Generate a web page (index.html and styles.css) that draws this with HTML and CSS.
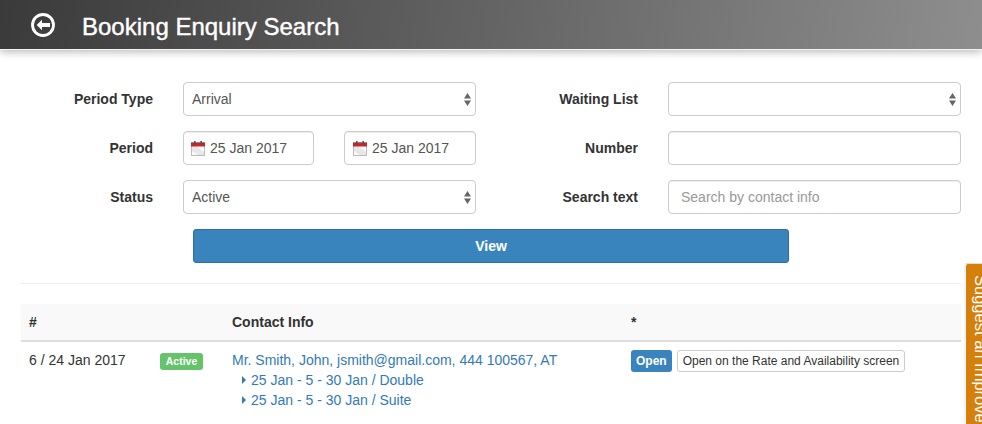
FILE: index.html
```html
<!DOCTYPE html>
<html lang="en">
<head>
<meta charset="utf-8">
<title>Booking Enquiry Search</title>
<link rel="stylesheet" href="styles.css">
</head>
<body>
<header class="topbar">
  <svg class="back" width="26" height="26" viewBox="0 0 26 26"><circle cx="13" cy="13" r="10.5" fill="none" stroke="#fff" stroke-width="2.8"/><path d="M6.7 13l5.3-5.3V11h8v4h-8v3.3z" fill="#fff"/></svg>
  <h1 class="title">Booking Enquiry Search</h1>
</header>
<main class="content">
  <form class="search">
    <div class="row">
      <label class="lbl">Period Type</label>
      <div class="field sel"><span>Arrival</span><svg class="updown" width="7" height="13" viewBox="0 0 7 13"><path d="M3.5 0L7 5.5H0zM3.5 13L0 7.5h7z" fill="#666"/></svg></div>
      <label class="lbl">Waiting List</label>
      <div class="field sel"><span></span><svg class="updown" width="7" height="13" viewBox="0 0 7 13"><path d="M3.5 0L7 5.5H0zM3.5 13L0 7.5h7z" fill="#666"/></svg></div>
    </div>
    <div class="row">
      <label class="lbl">Period</label>
      <div class="dates">
        <div class="field date"><svg class="cal" width="14" height="15" viewBox="0 0 14 15"><rect x=".5" y="1.5" width="13" height="13" fill="#e8e8e8" stroke="#bbb"/><path d="M1 10l6 4H1zM5 5l8 6V5z" fill="#fafafa"/><rect x="0" y="1.5" width="14" height="4" fill="#c5282a"/><rect x="3" y="0" width="1.6" height="3.5" fill="#555"/><rect x="9.4" y="0" width="1.6" height="3.5" fill="#555"/></svg><span>25 Jan 2017</span></div>
        <div class="field date"><svg class="cal" width="14" height="15" viewBox="0 0 14 15"><rect x=".5" y="1.5" width="13" height="13" fill="#e8e8e8" stroke="#bbb"/><path d="M1 10l6 4H1zM5 5l8 6V5z" fill="#fafafa"/><rect x="0" y="1.5" width="14" height="4" fill="#c5282a"/><rect x="3" y="0" width="1.6" height="3.5" fill="#555"/><rect x="9.4" y="0" width="1.6" height="3.5" fill="#555"/></svg><span>25 Jan 2017</span></div>
      </div>
      <label class="lbl">Number</label>
      <div class="field"></div>
    </div>
    <div class="row">
      <label class="lbl">Status</label>
      <div class="field sel"><span>Active</span><svg class="updown" width="7" height="13" viewBox="0 0 7 13"><path d="M3.5 0L7 5.5H0zM3.5 13L0 7.5h7z" fill="#666"/></svg></div>
      <label class="lbl">Search text</label>
      <div class="field"><span class="ph">Search by contact info</span></div>
    </div>
    <button class="view" type="button">View</button>
  </form>
  <hr class="rule">
  <table class="results">
    <thead>
      <tr><th class="c1">#</th><th class="c2"></th><th class="c3">Contact Info</th><th>*</th></tr>
    </thead>
    <tbody>
      <tr>
        <td>6 / 24 Jan 2017</td>
        <td><span class="badge">Active</span></td>
        <td>
          <a class="link">Mr. Smith, John, jsmith@gmail.com, 444 100567, AT</a>
          <a class="link sub"><i class="tri"></i>25 Jan - 5 - 30 Jan / Double</a>
          <a class="link sub"><i class="tri"></i>25 Jan - 5 - 30 Jan / Suite</a>
        </td>
        <td class="acts"><span class="btn-open">Open</span><span class="btn-rate">Open on the Rate and Availability screen</span></td>
      </tr>
    </tbody>
  </table>
</main>
<aside class="suggest"><span>Suggest an Improvement</span></aside>
</body>
</html>
```
FILE: styles.css
```css
* { box-sizing: border-box; }
html, body { margin: 0; height: 424px; overflow: hidden; }
body { font-family: "Liberation Sans", Arial, sans-serif; font-size: 14px; color: #333; background: #fff; position: relative; }
.topbar { height: 50px; display: flex; align-items: center; padding-left: 30px; background: linear-gradient(100deg, #3a3a3a 0%, #8e8e8e 100%); border-bottom: 1px solid #f4f4f4; box-shadow: 0 2px 8px rgba(0,0,0,.28); }
.back { flex: none; }
.title { margin: 4px 0 0 26px; font-size: 24px; font-weight: 400; line-height: 46px; color: #fff; -webkit-text-stroke: .4px #fff; }
.content { padding: 32px 21px 0; }
.search { display: flex; flex-direction: column; }
.row { display: grid; grid-template-columns: 132px 293px 132px 293px; column-gap: 30px; align-items: center; height: 34px; margin-bottom: 15px; }
.lbl { font-weight: 700; text-align: right; }
.field { height: 34px; border: 1px solid #ccc; border-radius: 4px; background: #fff; display: flex; align-items: center; padding: 0 12px; color: #555; box-shadow: inset 0 1px 1px rgba(0,0,0,.075); }
.sel { padding: 0 4px 0 8px; justify-content: space-between; box-shadow: none; }
.dates { display: flex; justify-content: space-between; }
.date { width: 131px; padding: 0 7px; gap: 5px; }
.date + .date { width: 132px; padding-left: 8px; }
.cal { flex: none; }
.ph { color: #999; }
.view { display: block; width: 596px; height: 34px; margin: 0 0 0 172px; border: 1px solid #2e6da4; border-radius: 3px; background: #3a84be; color: #fff; font: 700 14px "Liberation Sans", Arial, sans-serif; }
.rule { margin: 20px 0; border: 0; border-top: 1px solid #eee; }
.results { width: 940px; border-collapse: collapse; table-layout: fixed; }
.results th { background: #f9f9f9; height: 37px; padding: 0 8px; text-align: left; border-bottom: 2px solid #ddd; font-weight: 700; }
.c1 { width: 130px; }
.c2 { width: 73px; }
.c3 { width: 399px; }
.results td { padding: 8px; vertical-align: top; line-height: 20px; }
.badge { display: block; width: 43px; height: 17px; background: #65c36b; color: #fff; font-size: 10.5px; font-weight: 700; line-height: 17px; text-align: center; border-radius: 3px; margin: 3px 0 0 1px; }
.link { display: block; color: #337ab7; }
.sub { padding-left: 10px; display: flex; align-items: center; }
.tri { width: 0; height: 0; border-left: 4px solid #337ab7; border-top: 4px solid transparent; border-bottom: 4px solid transparent; margin-right: 5px; }
.acts { display: flex; gap: 5px; align-items: flex-start; }
.btn-open { background: #3a84be; color: #fff; font-size: 12px; font-weight: 700; line-height: 20px; height: 22px; padding: 1px 5px; border-radius: 3px; }
.btn-rate { border: 1px solid #ccc; background: #fff; color: #333; font-size: 12px; line-height: 20px; height: 22px; padding: 0 5px; border-radius: 3px; white-space: nowrap; }
.suggest { position: absolute; left: 964px; top: 263px; width: 18px; height: 161px; background: #d5800b; border-left: 2px solid #f3f3f3; border-top: 1px solid #ddd; overflow: hidden; border-radius: 4px 0 0 0; }
.suggest span { position: absolute; left: 6px; top: 0; writing-mode: vertical-rl; color: #fff; font-size: 16.5px; line-height: 18px; white-space: nowrap; padding-top: 11px; }
```
